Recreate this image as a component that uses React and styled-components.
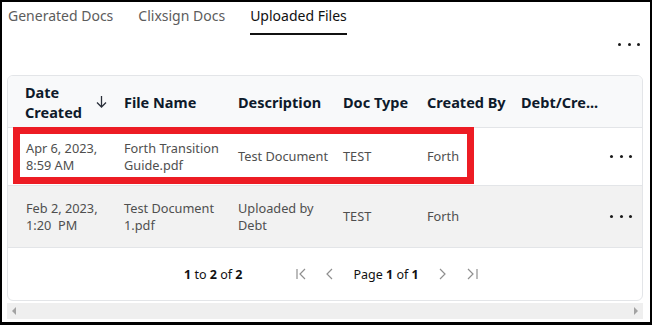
import React from "react";
import styled, { createGlobalStyle } from "styled-components";

const GlobalStyle = createGlobalStyle`
  html, body { margin: 0; padding: 0; background: #fff; }
  body { font-family: "Noto Sans", "Open Sans", sans-serif; }
  * { box-sizing: border-box; }
`;

const columns = "108px 114px 105px 84px 94px 87px 1fr";

const rows = [
  {
    date: ["Apr 6, 2023,", "8:59 AM"],
    file: ["Forth Transition", "Guide.pdf"],
    desc: ["Test Document"],
    type: "TEST",
    by: "Forth",
    height: 58,
    shade: false,
    marked: true,
  },
  {
    date: ["Feb 2, 2023,", "1:20  PM"],
    file: ["Test Document", "1.pdf"],
    desc: ["Uploaded by", "Debt"],
    type: "TEST",
    by: "Forth",
    height: 62,
    shade: true,
  },
];

function Dots() {
  return (
    <DotGroup>
      <Dot />
      <Dot />
      <Dot />
    </DotGroup>
  );
}

function SortDown() {
  return (
    <svg width="11" height="13" viewBox="0 0 11 13" fill="none">
      <path d="M5.5 1v11M1 7.5l4.5 4.5L10 7.5" stroke="#2a2f3a" strokeWidth="1.3" />
    </svg>
  );
}

function PageIcon({ kind }) {
  const paths = {
    first: "M2 2v10M10 2L5 7l5 5",
    prev: "M8 2L3 7l5 5",
    next: "M3 2l5 5-5 5",
    last: "M2 2l5 5-5 5M11 2v10",
  };
  return (
    <svg width="13" height="14" viewBox="0 0 13 14" fill="none">
      <path d={paths[kind]} stroke="#8f8f8f" strokeWidth="1.2" />
    </svg>
  );
}

export default function App() {
  return (
    <>
      <GlobalStyle />
      <Frame>
        <Tabs>
          <Tab>Generated Docs</Tab>
          <Tab>Clixsign Docs</Tab>
          <Tab $active>Uploaded Files</Tab>
        </Tabs>
        <Toolbar>
          <Dots />
        </Toolbar>
        <Card>
          <HeaderRow>
            <HeadCell $first>
              <span>
                Date
                <br />
                Created
              </span>
              <SortIcon>
                <SortDown />
              </SortIcon>
            </HeadCell>
            <HeadCell>File Name</HeadCell>
            <HeadCell>Description</HeadCell>
            <HeadCell>Doc Type</HeadCell>
            <HeadCell>Created By</HeadCell>
            <HeadCell>Debt/Cre...</HeadCell>
            <HeadCell />
          </HeaderRow>
          {rows.map((r, i) => (
            <Row key={i} $shade={r.shade} $height={r.height}>
              <Cell $first>
                {r.date[0]}
                <br />
                {r.date[1]}
              </Cell>
              <Cell>
                {r.file[0]}
                <br />
                {r.file[1]}
              </Cell>
              <Cell>
                {r.desc.map((d, k) => (
                  <React.Fragment key={k}>
                    {k > 0 && <br />}
                    {d}
                  </React.Fragment>
                ))}
              </Cell>
              <Cell>{r.type}</Cell>
              <Cell>{r.by}</Cell>
              <Cell />
              <ActionCell>
                <Dots />
              </ActionCell>
              {r.marked && <Highlight />}
            </Row>
          ))}
          <Footer>
            <Summary>
              <b>1</b> to <b>2</b> of <b>2</b>
            </Summary>
            <Pager>
              <PageIcon kind="first" />
              <PageIcon kind="prev" />
              <PageText>
                Page <b>1</b> of <b>1</b>
              </PageText>
              <PageIcon kind="next" />
              <PageIcon kind="last" />
            </Pager>
          </Footer>
        </Card>
        <ScrollBar>
          <Arrow $dir="left" />
          <Arrow $dir="right" />
        </ScrollBar>
      </Frame>
    </>
  );
}

const Frame = styled.div`
  width: 652px;
  height: 325px;
  border: 2px solid #000;
  border-bottom-width: 3px;
  overflow: hidden;
  background: #fff;
`;

const Tabs = styled.div`
  display: flex;
  gap: 25px;
  padding: 4px 0 0 6px;
`;

const Tab = styled.div`
  font-size: 14px;
  line-height: 20px;
  padding-bottom: 7px;
  color: ${(p) => (p.$active ? "#111" : "#5c5c5c")};
  border-bottom: 2px solid ${(p) => (p.$active ? "#111" : "transparent")};
`;

const Toolbar = styled.div`
  height: 40px;
  display: flex;
  justify-content: flex-end;
  padding: 8px 10px 0 0;
`;

const DotGroup = styled.div`
  display: flex;
  gap: 6.5px;
`;

const Dot = styled.span`
  width: 3px;
  height: 3px;
  border-radius: 50%;
  background: #1a1a1a;
`;

const Card = styled.div`
  margin: 0 7px 0 5px;
  border: 1px solid #e3e5e8;
  border-radius: 6px;
  overflow: hidden;
`;

const HeaderRow = styled.div`
  display: grid;
  grid-template-columns: ${columns};
  height: 52px;
  background: #f8f9fa;
  border-bottom: 1px solid #e3e5e8;
`;

const HeadCell = styled.div`
  display: flex;
  align-items: center;
  justify-content: space-between;
  padding-left: ${(p) => (p.$first ? "17px" : "8px")};
  padding-right: ${(p) => (p.$first ? "9px" : "0")};
  font-size: 14.5px;
  font-weight: 700;
  line-height: 20px;
  color: #0e1a2b;
  white-space: nowrap;
`;

const SortIcon = styled.span`
  display: flex;
  margin-top: -1px;
`;

const Row = styled.div`
  position: relative;
  display: grid;
  grid-template-columns: ${columns};
  height: ${(p) => p.$height}px;
  background: ${(p) => (p.$shade ? "#f2f2f2" : "#fff")};
  border-bottom: 1px solid #e3e5e8;
`;

const Cell = styled.div`
  display: flex;
  align-items: center;
  padding-left: ${(p) => (p.$first ? "18px" : "8px")};
  font-size: 12.75px;
  line-height: 17px;
  color: #4f4f4f;
  white-space: pre;
`;

const ActionCell = styled.div`
  display: flex;
  align-items: center;
  padding-left: 10px;
`;

const Highlight = styled.div`
  position: absolute;
  left: 5px;
  top: -1px;
  width: 461px;
  height: 57px;
  border: 7px solid #ed1c24;
  pointer-events: none;
`;

const Footer = styled.div`
  height: 52px;
  display: flex;
  align-items: center;
  padding-left: 176px;
  font-size: 12.5px;
  color: #111;
  b {
    font-weight: 700;
  }
`;

const Summary = styled.div`
  margin-right: 53px;
`;

const Pager = styled.div`
  display: flex;
  align-items: center;
  gap: 16px;
`;

const PageText = styled.div`
  margin: 0 2px 0 0;
`;

const ScrollBar = styled.div`
  margin: 2px 7px 0 5px;
  height: 16px;
  background: #efefef;
  display: flex;
  align-items: center;
  justify-content: space-between;
  padding: 0 5px;
`;

const Arrow = styled.span`
  width: 0;
  height: 0;
  border-top: 4px solid transparent;
  border-bottom: 4px solid transparent;
  ${(p) =>
    p.$dir === "left"
      ? "border-right: 4px solid #a3a3a3;"
      : "border-left: 4px solid #a3a3a3;"}
`;
